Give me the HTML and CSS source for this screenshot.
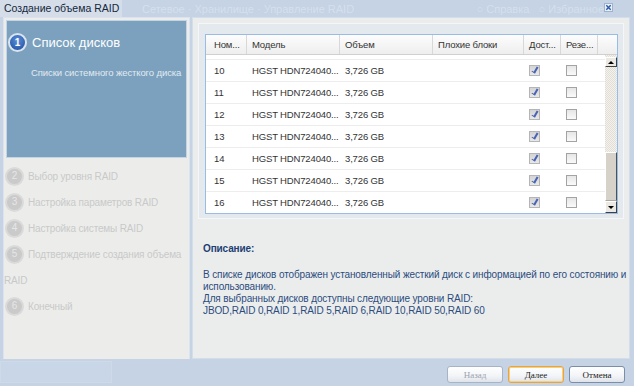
FILE: index.html
```html
<!DOCTYPE html>
<html>
<head>
    <title>Создание объема RAID</title>
    <link rel="stylesheet" href="styles.css">
</head>
<body>
    <div class="titlebar">
        <div class="title">Создание объема RAID</div>
        <div class="ghost">Сетевое · Хранилище · Управление RAID</div>
        <div class="ghost ghost-right">○ Справка &nbsp; ○ Избранное</div>
        <div class="close">
            <svg width="9" height="9" viewBox="0 0 9 9">
                <rect x="0.5" y="0.5" width="8" height="8" fill="#e9eff7" stroke="#9fb3d1"/>
                <path d="M2.3 2.3 L6.7 6.7 M6.7 2.3 L2.3 6.7" stroke="#2a5aa8" stroke-width="1.4"/>
            </svg>
        </div>
    </div>

    <div class="main">
        <div class="side">
            <div class="current">
                <div class="current-head">
                    <span class="num num-active">1</span>
                    <span class="current-title">Список дисков</span>
                </div>
                <div class="current-sub">Списки системного жесткого диска</div>
            </div>
            <div class="steps">
                <p class="step"><span class="num">2</span>Выбор уровня RAID</p>
                <p class="step"><span class="num">3</span>Настройка параметров RAID</p>
                <p class="step"><span class="num">4</span>Настройка системы RAID</p>
                <p class="step"><span class="num">5</span>Подтверждение создания объема RAID</p>
                <p class="step"><span class="num">6</span>Конечный</p>
            </div>
        </div>

        <div class="content">
            <div class="gridframe">
                <div class="grid">
                    <div class="grid-head">
                        <div class="cell c1">Ном...</div>
                        <div class="cell c2">Модель</div>
                        <div class="cell c3">Объем</div>
                        <div class="cell c4">Плохие блоки</div>
                        <div class="cell c5">Дост...</div>
                        <div class="cell c6">Резе...</div>
                        <div class="cell c7"></div>
                    </div>
                    <div class="grid-body">
                        <div class="rows">
                            <div class="rows-inner">
                                <!-- row 9 is scrolled almost out of view, only the checkbox edges show -->
                                <div class="row"><div class="cell c1"></div><div class="cell c2"></div><div class="cell c3"></div><div class="cell c4"></div><div class="cell c5"><span class="cb checked"></span></div><div class="cell c6"><span class="cb"></span></div></div>
                                <div class="row"><div class="cell c1">10</div><div class="cell c2">HGST HDN724040...</div><div class="cell c3">3,726 GB</div><div class="cell c4"></div><div class="cell c5"><span class="cb checked"></span></div><div class="cell c6"><span class="cb"></span></div></div>
                                <div class="row"><div class="cell c1">11</div><div class="cell c2">HGST HDN724040...</div><div class="cell c3">3,726 GB</div><div class="cell c4"></div><div class="cell c5"><span class="cb checked"></span></div><div class="cell c6"><span class="cb"></span></div></div>
                                <div class="row"><div class="cell c1">12</div><div class="cell c2">HGST HDN724040...</div><div class="cell c3">3,726 GB</div><div class="cell c4"></div><div class="cell c5"><span class="cb checked"></span></div><div class="cell c6"><span class="cb"></span></div></div>
                                <div class="row"><div class="cell c1">13</div><div class="cell c2">HGST HDN724040...</div><div class="cell c3">3,726 GB</div><div class="cell c4"></div><div class="cell c5"><span class="cb checked"></span></div><div class="cell c6"><span class="cb"></span></div></div>
                                <div class="row"><div class="cell c1">14</div><div class="cell c2">HGST HDN724040...</div><div class="cell c3">3,726 GB</div><div class="cell c4"></div><div class="cell c5"><span class="cb checked"></span></div><div class="cell c6"><span class="cb"></span></div></div>
                                <div class="row"><div class="cell c1">15</div><div class="cell c2">HGST HDN724040...</div><div class="cell c3">3,726 GB</div><div class="cell c4"></div><div class="cell c5"><span class="cb checked"></span></div><div class="cell c6"><span class="cb"></span></div></div>
                                <div class="row"><div class="cell c1">16</div><div class="cell c2">HGST HDN724040...</div><div class="cell c3">3,726 GB</div><div class="cell c4"></div><div class="cell c5"><span class="cb checked"></span></div><div class="cell c6"><span class="cb"></span></div></div>
                            </div>
                        </div>
                        <div class="scrollbar">
                            <div class="sb-btn"><span class="arrow-up"></span></div>
                            <div class="sb-track"></div>
                            <div class="sb-thumb"></div>
                            <div class="sb-btn sb-down"><span class="arrow-down"></span></div>
                        </div>
                    </div>
                </div>
            </div>

            <div class="desc">
                <div class="desc-title">Описание:</div>
                <div class="desc-text">
                    В списке дисков отображен установленный жесткий диск с информацией по его состоянию и использованию.<br>
                    Для выбранных дисков доступны следующие уровни RAID:<br>
                    JBOD,RAID 0,RAID 1,RAID 5,RAID 6,RAID 10,RAID 50,RAID 60
                </div>
            </div>
        </div>
    </div>

    <div class="footer">
        <div class="ghostbox"></div>
        <div class="buttons">
            <button type="button" class="btn" disabled>Назад</button>
            <button type="button" class="btn btn-focus">Далее</button>
            <button type="button" class="btn">Отмена</button>
        </div>
    </div>
</body>
</html>
```

FILE: styles.css
```css
body {
    margin: 0;
    padding: 0;
    width: 634px;
    height: 386px;
    overflow: hidden;
    background-color: #c5d3e5;
    font-family: "Liberation Sans", Arial, sans-serif;
    font-size: 10px;
    color: #333;
}

/* title bar */
.titlebar {
    height: 17px;
    display: flex;
    align-items: center;
    position: relative;
}

.title {
    flex-shrink: 0;
    width: 118px;
    height: 17px;
    padding-left: 4px;
    line-height: 16px;
    font-size: 10.5px;
    white-space: nowrap;
    color: #15283d;
    background-color: #d4dde8;
}

.ghost {
    margin-left: 20px;
    font-size: 11px;
    white-space: nowrap;
    color: rgba(255, 255, 255, 0.3);
}

.ghost-right {
    margin-left: auto;
    margin-right: 30px;
}

.close {
    position: absolute;
    top: 3px;
    right: 21px;
    height: 9px;
}

/* main area */
.main {
    display: flex;
    height: 342px;
}

.side {
    width: 185px;
    margin-left: 3px;
    border: 1px solid #dbe4ee;
    border-bottom: none;
    background-color: #ecedeb;
}

.current {
    margin: 3px 3px 0 3px;
    height: 136px;
    background-color: #7ba1be;
    box-shadow: 0 0 0 1px #c4d4e4;
}

.current-head {
    display: flex;
    align-items: center;
    padding-top: 12px;
    padding-left: 1px;
}

.current-title {
    margin-left: 5px;
    font-size: 13px;
    color: #fff;
}

.current-sub {
    margin-top: 15px;
    padding-left: 24px;
    font-size: 9.5px;
    letter-spacing: -0.1px;
    color: #e2eaf1;
    white-space: nowrap;
}

.num {
    display: inline-flex;
    justify-content: center;
    align-items: center;
    width: 15px;
    height: 15px;
    border-radius: 50%;
    border: 2px solid #dadada;
    background-color: #cacaca;
    color: #e6e6e6;
    font-size: 10px;
    letter-spacing: 0;
    vertical-align: middle;
}

.num-active {
    border-color: #dbe4ee;
    background: radial-gradient(circle at 50% 35%, #5a8fd8, #1c4a9e);
    color: #fff;
    font-weight: bold;
}

.steps {
    padding-top: 7px;
}

.step {
    margin: 0;
    width: 183px;
    line-height: 26px;
    letter-spacing: -0.15px;
    color: #c9c9c9;
}

.step .num {
    margin-left: 1px;
    margin-right: 4px;
    position: relative;
    top: -1px;
}

/* content */
.content {
    width: 436px;
    margin-left: 2px;
    border: 1px solid #d3deea;
    background-color: #ebedec;
}

.gridframe {
    margin: 5px 5px 0 5px;
    padding: 10px 5px 4px 6px;
    background-color: #e4e9ee;
    border: 1px solid #f4f7fa;
}

.grid {
    border: 1px solid #99bbe8;
    background-color: #fff;
    font-size: 9.5px;
    letter-spacing: -0.15px;
}

.grid-head {
    display: flex;
    height: 19px;
    border-bottom: 1px solid #d0d0d0;
    background: linear-gradient(#fdfdfd, #eeeeee);
}

.grid-head .cell {
    border-right: 1px solid #d8d8d8;
    line-height: 19px;
}

.grid-head .c7 {
    border-right: none;
    flex: 1;
}

.cell {
    padding-left: 5px;
    box-sizing: border-box;
    white-space: nowrap;
}

.c1 { width: 41px; padding-left: 8px; }
.c2 { width: 93px; }
.c3 { width: 93px; }
.c4 { width: 91px; }
.c5 { width: 37px; }
.c6 { width: 37px; }

.grid-body {
    display: flex;
    height: 158px;
}

.rows {
    flex: 1;
    overflow: hidden;
}

.rows-inner {
    margin-top: -17px;
}

.row {
    display: flex;
    align-items: center;
    height: 21px;
    border-bottom: 1px solid #ededed;
}

.cb {
    display: block;
    width: 9px;
    height: 9px;
    border: 1px solid #a3a3a3;
    background: linear-gradient(#e6e6e6, #fafafa);
    position: relative;
}

.cb.checked {
    border-color: #b5b5b5;
    background: linear-gradient(#d4d4d4, #e8e8e8);
}

.cb.checked::after {
    content: "";
    position: absolute;
    left: 3px;
    top: 0;
    width: 2px;
    height: 6px;
    border-right: 2px solid #4862b4;
    border-bottom: 1px solid #4862b4;
    transform: rotate(30deg);
}

/* scrollbar */
.scrollbar {
    width: 12px;
    display: flex;
    flex-direction: column;
    background-color: #ebe8e2;
    background-image: repeating-conic-gradient(#f4f2ee 0 25%, #e2ded6 0 50%);
    background-size: 2px 2px;
}

.sb-btn {
    height: 10px;
    margin-top: 2px;
    display: flex;
    justify-content: center;
    align-items: center;
    background-color: #ece9e3;
    border: 1px solid #fff;
    border-right-color: #404040;
    border-bottom-color: #404040;
    box-sizing: border-box;
}

.sb-down {
    margin-top: 0;
    height: 12px;
}

.sb-track {
    flex: 1;
}

.sb-thumb {
    height: 49px;
    background-color: #d6d2ca;
    border: 1px solid #fff;
    border-right-color: #505050;
    border-bottom-color: #a8a8a8;
    box-sizing: border-box;
}

.arrow-up, .arrow-down {
    width: 0;
    height: 0;
    border-left: 3px solid transparent;
    border-right: 3px solid transparent;
}

.arrow-up { border-bottom: 3px solid #000; }
.arrow-down { border-top: 3px solid #000; }

/* description */
.desc {
    padding: 24px 0 0 10px;
    color: #2b4c7e;
    letter-spacing: -0.12px;
}

.desc-title {
    font-weight: bold;
    color: #1d3f73;
    line-height: 12px;
}

.desc-text {
    margin-top: 14px;
    line-height: 12px;
}

/* footer */
.footer {
    display: flex;
    height: 27px;
}

.ghostbox {
    width: 110px;
    height: 20px;
    margin-top: 2px;
    border: 1px solid #cfdae8;
    background-color: #c9d6e7;
}

.buttons {
    margin-left: auto;
    margin-right: 9px;
    padding-top: 7px;
    display: flex;
    gap: 5px;
}

.btn {
    width: 56px;
    height: 17px;
    padding: 0;
    font-family: "Liberation Serif", "Times New Roman", serif;
    font-size: 9px;
    color: #1a1a1a;
    border: 1px solid #7a8ea9;
    border-radius: 3px;
    background: linear-gradient(#ffffff, #f2f4f7 60%, #dfe4ea);
}

.btn:disabled {
    color: #9aa3ae;
    border-color: #a6b4c6;
}

.btn-focus {
    border-color: #e9a53a;
    box-shadow: inset 0 0 0 1px #f6cf86;
}
```
